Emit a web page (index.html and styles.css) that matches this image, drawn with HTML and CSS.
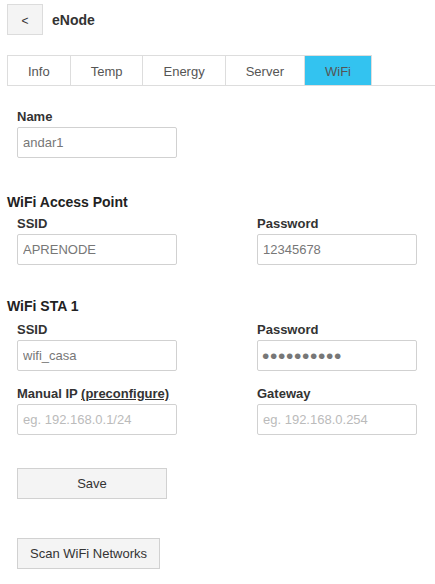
FILE: index.html
```html
<!DOCTYPE html>
<html>
<head>
<meta charset="utf-8">
<link rel="stylesheet" href="styles.css">
</head>
<body>
<div class="page">
  <div class="header">
    <button class="back">&lt;</button>
    <span class="title">eNode</span>
  </div>
  <div class="tabs">
    <div class="tab">Info</div>
    <div class="tab">Temp</div>
    <div class="tab">Energy</div>
    <div class="tab">Server</div>
    <div class="tab active">WiFi</div>
  </div>
  <div class="form">
    <div class="field name-field">
      <label class="label">Name</label>
      <input class="input" type="text" value="andar1">
    </div>
    <h3 class="heading">WiFi Access Point</h3>
    <div class="grid">
      <div class="field">
        <label class="label">SSID</label>
        <input class="input" type="text" value="APRENODE">
      </div>
      <div class="field">
        <label class="label">Password</label>
        <input class="input" type="text" value="12345678">
      </div>
    </div>
    <h3 class="heading sta">WiFi STA 1</h3>
    <div class="grid">
      <div class="field">
        <label class="label">SSID</label>
        <input class="input" type="text" value="wifi_casa">
      </div>
      <div class="field">
        <label class="label">Password</label>
        <input class="input password" type="password" value="abcdefghij">
      </div>
      <div class="field">
        <label class="label">Manual IP <a class="link" href="#">(preconfigure)</a></label>
        <input class="input" type="text" placeholder="eg. 192.168.0.1/24">
      </div>
      <div class="field">
        <label class="label">Gateway</label>
        <input class="input" type="text" placeholder="eg. 192.168.0.254">
      </div>
    </div>
    <button class="btn save">Save</button>
    <button class="btn scan">Scan WiFi Networks</button>
  </div>
</div>
</body>
</html>
```
FILE: styles.css
```css
html, body {
  margin: 0;
  padding: 0;
  background: #fff;
}
body {
  font-family: "Liberation Sans", Arial, sans-serif;
  color: #333;
}
.page {
  padding: 4px 0 0 7px;
}
.header {
  display: flex;
  align-items: center;
  gap: 9px;
  height: 31px;
}
.back {
  box-sizing: border-box;
  width: 36px;
  height: 31px;
  border: 1px solid #dcdcdc;
  background: #f4f4f4;
  color: #333;
  font-family: "Liberation Sans", Arial, sans-serif;
  font-size: 12px;
  padding: 2px 0 0;
  margin: 0;
}
.title {
  font-size: 14px;
  font-weight: bold;
  color: #333;
}
.tabs {
  display: flex;
  margin-top: 20px;
  border-bottom: 1px solid #ddd;
}
.tab {
  height: 29px;
  line-height: 31px;
  padding: 0 20px;
  border-top: 1px solid #ddd;
  border-left: 1px solid #ddd;
  font-size: 13px;
  color: #555;
}
.tab.active {
  background: #33c3f0;
  border-right: 1px solid #ddd;
}
.form {
  padding-left: 10px;
}
.field {
  display: flex;
  flex-direction: column;
}
.name-field {
  margin-top: 23px;
}
.label {
  display: block;
  font-size: 13px;
  font-weight: bold;
  line-height: 16px;
  margin-bottom: 2px;
  color: #333;
}
.link {
  color: #333;
  text-decoration: underline;
}
.input {
  box-sizing: border-box;
  width: 160px;
  height: 31px;
  border: 1px solid #d1d1d1;
  border-radius: 2px;
  padding: 0 5px;
  margin: 0;
  font-family: "Liberation Sans", Arial, sans-serif;
  font-size: 13px;
  color: #777;
  background: #fff;
}
.input.password {
  font-size: 21px;
  letter-spacing: 0.65px;
  padding-left: 4px;
}
.input::placeholder {
  color: #bbb;
}
.heading {
  font-size: 14px;
  font-weight: bold;
  line-height: 17px;
  margin: 36px 0 5px -10px;
  color: #222;
}
.heading.sta {
  margin-top: 33px;
  margin-bottom: 7px;
}
.grid {
  display: grid;
  grid-template-columns: 240px 160px;
  row-gap: 15px;
}
.btn {
  display: block;
  box-sizing: border-box;
  height: 31px;
  border: 1px solid #d1d1d1;
  background: #f4f4f4;
  color: #333;
  font-family: "Liberation Sans", Arial, sans-serif;
  font-size: 13px;
  padding: 0 12px;
  margin: 0;
}
.save {
  width: 150px;
  margin-top: 33px;
}
.scan {
  margin-top: 39px;
}
```
